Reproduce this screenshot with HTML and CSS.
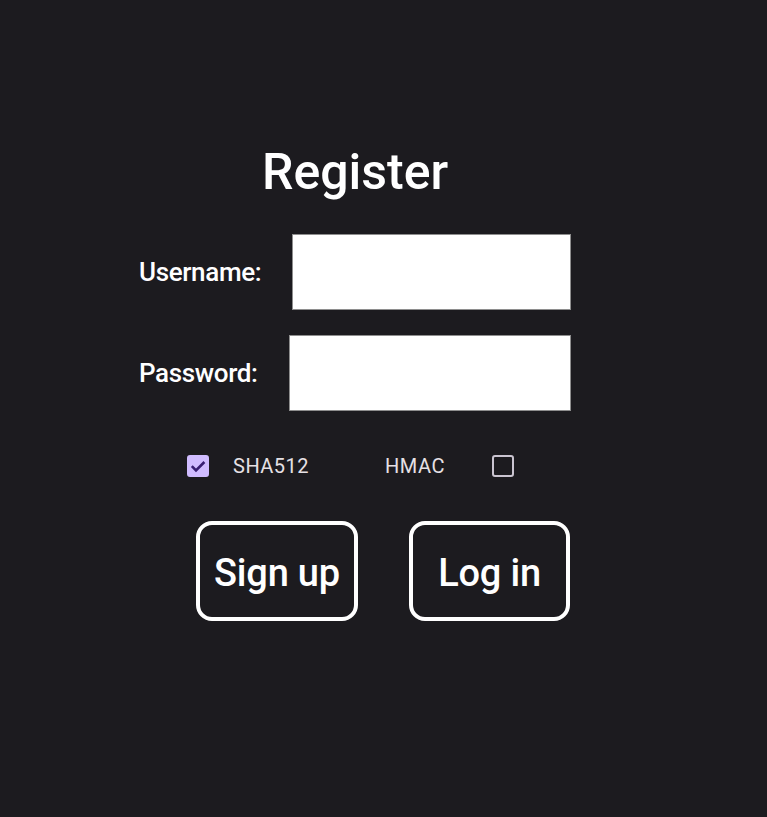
FILE: index.html
```html
<!DOCTYPE html>
<html>
<head>
<meta charset="utf-8">
<link rel="stylesheet" href="styles.css">
</head>
<body>
<main class="form">
  <h1 class="title">Register</h1>
  <div class="row">
    <label class="label">Username:</label>
    <input class="field" type="text">
  </div>
  <div class="row row-pass">
    <label class="label">Password:</label>
    <input class="field" type="password">
  </div>
  <div class="checks">
    <span class="box checked">
      <svg viewBox="0 0 22 22" width="22" height="22"><path d="M4.8 11.2 L9 15.4 L17.4 7" fill="none" stroke="#381e72" stroke-width="2.6"/></svg>
    </span>
    <span class="check-label sha">SHA512</span>
    <span class="check-label hmac">HMAC</span>
    <span class="box"></span>
  </div>
  <div class="buttons">
    <button class="btn">Sign up</button>
    <button class="btn login">Log in</button>
  </div>
</main>
</body>
</html>
```
FILE: styles.css
```css
html, body {
  margin: 0;
  padding: 0;
  background: #1c1b1f;
  height: 100%;
}
body {
  font-family: Roboto, "Noto Sans", sans-serif;
  color: #ffffff;
}
.form {
  width: 432px;
  margin-left: 139px;
  padding-top: 140px;
  display: flex;
  flex-direction: column;
}
.title {
  margin: 0;
  font-size: 50px;
  font-weight: 500;
  line-height: 64px;
  height: 94px;
  text-align: center;
}
.row {
  display: flex;
  align-items: center;
  height: 76px;
}
.row-pass {
  margin-top: 25px;
}
.label {
  font-size: 26px;
  font-weight: 500;
  letter-spacing: -0.35px;
  margin-right: 31px;
  white-space: nowrap;
}
.field {
  flex: 1;
  height: 76px;
  box-sizing: border-box;
  border: 1px solid #8e8e8e;
  background: #ffffff;
  margin: 0;
  padding: 0;
  outline: none;
}
.checks {
  display: flex;
  align-items: center;
  height: 22px;
  margin-top: 44px;
  padding-left: 48px;
}
.box {
  width: 22px;
  height: 22px;
  box-sizing: border-box;
  border: 2px solid #cac4d0;
  border-radius: 3px;
  display: flex;
}
.box.checked {
  background: #d0bcff;
  border-color: #d0bcff;
}
.box.checked svg {
  margin: -2px;
}
.check-label {
  font-size: 20px;
  color: #e6e1e5;
  letter-spacing: 0.5px;
}
.sha {
  margin-left: 24px;
}
.hmac {
  margin-left: 76px;
  margin-right: 47px;
}
.buttons {
  display: flex;
  gap: 51px;
  margin-top: 44px;
  padding-left: 57px;
}
.btn {
  width: 162px;
  height: 100px;
  box-sizing: border-box;
  border: 4px solid #ffffff;
  border-radius: 16px;
  background: transparent;
  color: #ffffff;
  font-family: Roboto, "Noto Sans", sans-serif;
  font-size: 38px;
  font-weight: 500;
  padding: 4px 0 0;
  letter-spacing: -0.2px;
}
.login {
  width: 161px;
}
```
